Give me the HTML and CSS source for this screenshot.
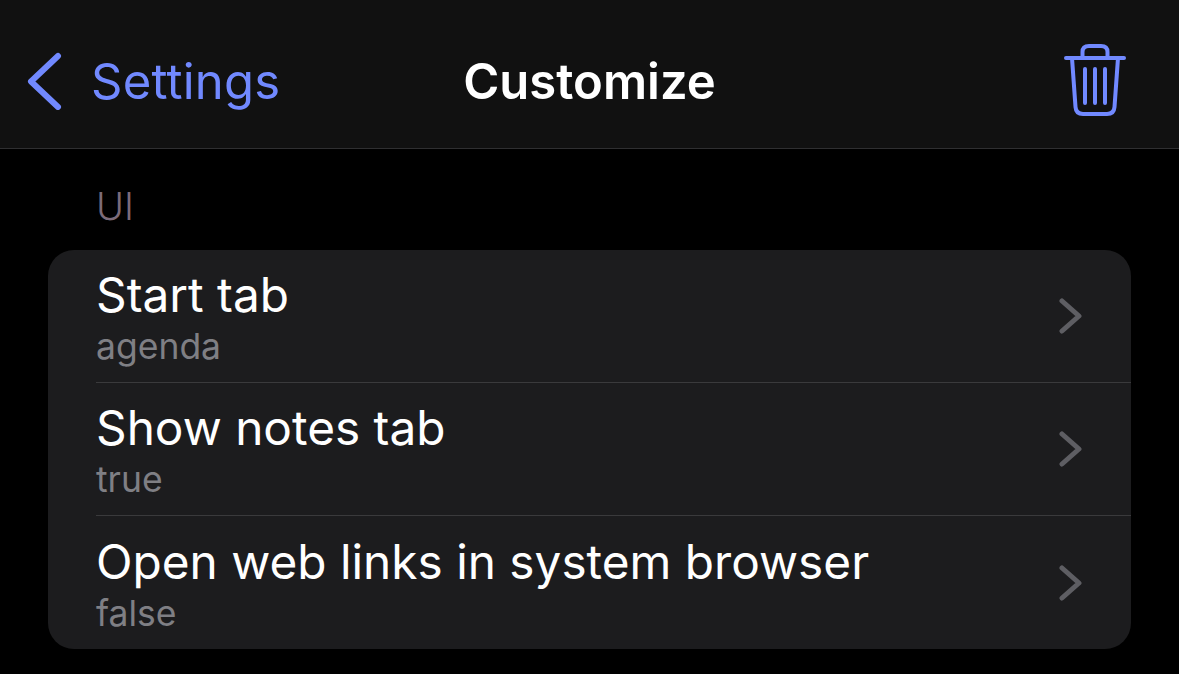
FILE: index.html
```html
<!DOCTYPE html>
<html lang="en">
<head>
    <meta charset="UTF-8">
    <title>Customize</title>
    <link rel="stylesheet" href="styles.css">
</head>
<body>
    <div class="navbar">
        <div class="nav-back">
            <svg class="back-icon" width="36" height="58" viewBox="0 0 36 58">
                <path d="M32 4 L5 29.500 L32 55" fill="none" stroke="#7189ff" stroke-width="6" stroke-linecap="round" stroke-linejoin="round"/>
            </svg>
            <span class="back-label">Settings</span>
        </div>
        <h1 class="nav-title">Customize</h1>
        <svg class="trash-icon" width="64" height="74" viewBox="0 0 64 74">
            <path d="M3 14 H61" stroke-width="4"/>
            <path d="M9 14 L12.500 63 Q13 70 20 70 H44 Q51 70 51.500 63 L55 14" stroke-width="4"/>
            <path d="M19.500 14 V8 Q19.500 2 26 2 H38 Q44.500 2 44.500 8 V14" stroke-width="4"/>
            <path d="M22 25 V59 M32 25 V59 M42 25 V59" stroke-width="4"/>
        </svg>
    </div>

    <div class="section-label">UI</div>
    <div class="group">
        <div class="row">
            <div class="row-text">
                <div class="row-title">Start tab</div>
                <div class="row-value">agenda</div>
            </div>
            <svg class="chevron" width="24" height="36" viewBox="0 0 24 36">
                <path d="M3 3 L20 18 L3 33" fill="none" stroke="#5e5e63" stroke-width="5" stroke-linecap="round" stroke-linejoin="round"/>
            </svg>
        </div>
        <div class="row">
            <div class="row-text">
                <div class="row-title">Show notes tab</div>
                <div class="row-value">true</div>
            </div>
            <svg class="chevron" width="24" height="36" viewBox="0 0 24 36">
                <path d="M3 3 L20 18 L3 33" fill="none" stroke="#5e5e63" stroke-width="5" stroke-linecap="round" stroke-linejoin="round"/>
            </svg>
        </div>
        <div class="row">
            <div class="row-text">
                <div class="row-title">Open web links in system browser</div>
                <div class="row-value">false</div>
            </div>
            <svg class="chevron" width="24" height="36" viewBox="0 0 24 36">
                <path d="M3 3 L20 18 L3 33" fill="none" stroke="#5e5e63" stroke-width="5" stroke-linecap="round" stroke-linejoin="round"/>
            </svg>
        </div>
    </div>
</body>
</html>
```

FILE: styles.css
```css
* {
    margin: 0;
    padding: 0;
    box-sizing: border-box;
}

html, body {
    height: 674px;
    overflow: hidden;
}

body {
    font-family: Inter, "Liberation Sans", sans-serif;
    background-color: #000;
    color: #fff;
}

.navbar {
    height: 149px;
    padding: 14px 52px 0 26px;
    background-color: #111111;
    border-bottom: 1px solid #2f2f31;
    display: flex;
    align-items: center;
    justify-content: space-between;
    position: relative;
}

.nav-back {
    display: flex;
    align-items: center;
    gap: 29px;
    color: #7189ff;
}

.back-label {
    font-size: 49px;
    letter-spacing: 0.2px;
}

.nav-title {
    position: absolute;
    left: 0;
    right: 0;
    text-align: center;
    font-size: 49px;
    font-weight: 600;
    pointer-events: none;
}

.trash-icon path {
    fill: none;
    stroke: #7189ff;
    stroke-linecap: round;
    stroke-linejoin: round;
}

.section-label {
    padding: 35px 0 0 96px;
    height: 101px;
    font-size: 38px;
    font-weight: 300;
    line-height: 44px;
    color: #7c6b79;
}

.group {
    margin: 0 48px;
    background-color: #1c1c1e;
    border-radius: 26px;
    overflow: hidden;
}

.row {
    height: 133px;
    margin-left: 48px;
    padding-right: 48px;
    display: flex;
    align-items: center;
    justify-content: space-between;
    border-bottom: 1px solid #3a3a3c;
}

.row:last-child {
    border-bottom: none;
}

.row-text {
    padding-top: 5px;
}

.row-title {
    font-size: 47.750px;
    line-height: 54px;
}

.row-value {
    margin-top: 3px;
    font-size: 35.500px;
    line-height: 44px;
    color: #7f7f84;
}
```
